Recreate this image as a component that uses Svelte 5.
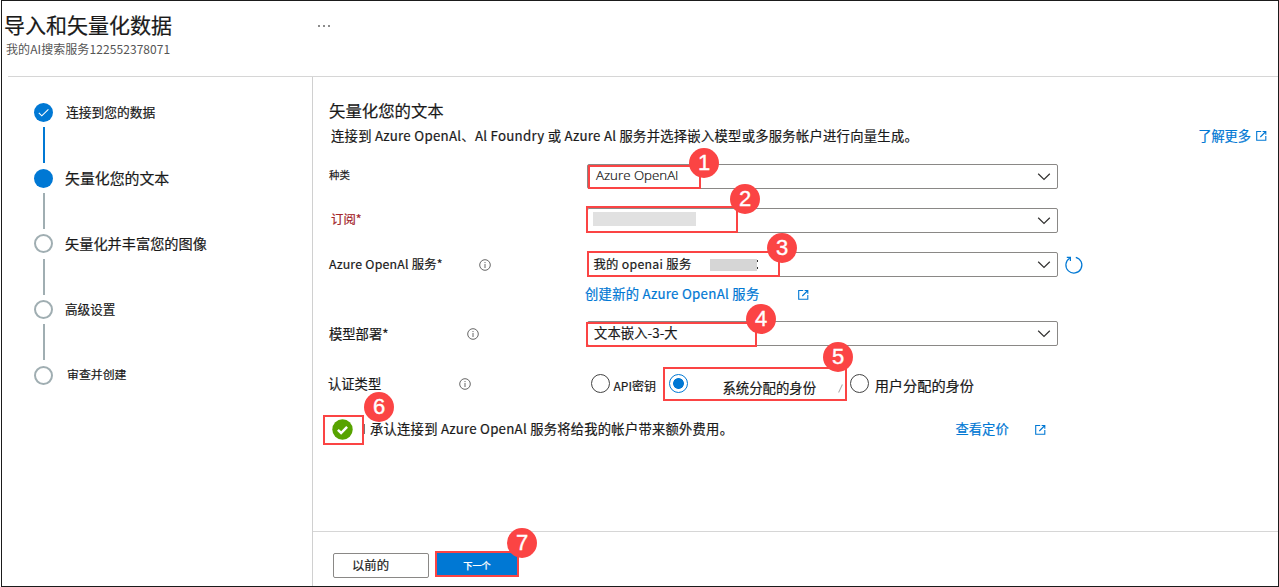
<script>
  const steps = [
    { text: '连接到您的数据', state: 'done' },
    { text: '矢量化您的文本', state: 'current' },
    { text: '矢量化并丰富您的图像', state: 'todo' },
    { text: '高级设置', state: 'todo' },
    { text: '审查并创建', state: 'todo' }
  ];
</script>

{#snippet chevron()}
  <svg class="chevron" width="14" height="9" viewBox="0 0 14 9"><path d="M1.2 1.8 L7 7.4 L12.8 1.8" fill="none" stroke="#323130" stroke-width="1.2" /></svg>
{/snippet}

{#snippet info()}
  <svg class="info" width="12" height="12" viewBox="0 0 12 12">
    <circle cx="6" cy="6" r="5.3" fill="none" stroke="#555" stroke-width=".9" />
    <path d="M6 5v4M6 3v1.1" stroke="#555" stroke-width=".9" />
  </svg>
{/snippet}

{#snippet external()}
  <svg class="ext" width="11" height="11" viewBox="0 0 11 11" fill="none" stroke="#0078d4" stroke-width="1.1">
    <path d="M5.2 1.5H.7v8.8h9.1V6M6.6 1.5h3.2v3.2M9.8 1.5L4.3 7" />
  </svg>
{/snippet}

<div class="page">
  <header>
    <div class="titles">
      <h1>导入和矢量化数据</h1>
      <p class="subtitle">我的AI搜索服务122552378071</p>
    </div>
    <span class="more"><i></i><i></i><i></i></span>
  </header>

  <div class="body">
    <nav>
      {#each steps as step, i}
        {#if i > 0}
          <div class="line" class:active={i === 1}></div>
        {/if}
        <div class="step">
          <span class="dot {step.state}">
            {#if step.state === 'done'}
              <svg width="19" height="19" viewBox="0 0 19 19"><path d="M4.8 9.8l3 3 6.6-6.5" fill="none" stroke="#fff" stroke-width="1.1" /></svg>
            {/if}
          </span>
          <span class="label l{i + 1}">{step.text}</span>
        </div>
      {/each}
    </nav>

    <main>
      <section class="content">
        <h2>矢量化您的文本</h2>
        <div class="desc">
          <p>连接到 Azure OpenAl、Al Foundry 或 Azure Al 服务并选择嵌入模型或多服务帐户进行向量生成。</p>
          <a class="learn"><span>了解更多</span>{@render external()}</a>
        </div>

        <div class="row kind">
          <div class="name">种类</div>
          <div class="select"><span>Azure OpenAI</span>{@render chevron()}</div>
        </div>
        <div class="row sub">
          <div class="name">订阅*</div>
          <div class="select"><span class="masked"></span>{@render chevron()}</div>
        </div>
        <div class="row service">
          <div class="name"><span>Azure OpenAl 服务*</span>{@render info()}</div>
          <div class="select"><span class="value">我的 openai 服务</span><span class="masked"></span><span class="tail"></span>{@render chevron()}</div>
          <svg class="refresh" width="20" height="20" viewBox="0 0 20 20" fill="none" stroke="#0078d4" stroke-width="1.2">
            <path d="M11.8 2.3A8 8 0 1 1 5.6 3.3M2.8 2.4H6.4V6" />
          </svg>
        </div>
        <div class="create"><a>创建新的 Azure OpenAl 服务</a>{@render external()}</div>
        <div class="row model">
          <div class="name"><span>模型部署*</span>{@render info()}</div>
          <div class="select"><span class="value">文本嵌入-3-大</span>{@render chevron()}</div>
        </div>
        <div class="row auth">
          <div class="name"><span>认证类型</span>{@render info()}</div>
          <div class="radios">
            <span class="radio"></span><span class="api">API密钥</span>
            <span class="radio on"></span><span class="system">系统分配的身份</span>
            <span class="slash"></span>
            <span class="radio last"></span><span class="user">用户分配的身份</span>
          </div>
        </div>
        <div class="ack">
          <svg width="21" height="21" viewBox="0 0 21 21"><circle cx="10.5" cy="10.5" r="10.2" fill="#57a300" /><path d="M5.9 10.9l3.2 3.1 6-6.2" fill="none" stroke="#fff" stroke-width="2.5" /></svg>
          <span class="edge"></span>
          <span class="agree">承认连接到 Azure OpenAl 服务将给我的帐户带来额外费用。</span>
          <a class="pricing"><span>查看定价</span>{@render external()}</a>
        </div>
      </section>
      <footer>
        <button class="prev">以前的</button>
        <button class="next">下一个</button>
      </footer>
    </main>
  </div>

  <div class="mark box1"><b>1</b></div>
  <div class="mark box2"><b>2</b></div>
  <div class="mark box3"><b>3</b></div>
  <div class="mark box4"><b>4</b></div>
  <div class="mark box5"><b>5</b></div>
  <div class="mark box6"><b>6</b></div>
  <div class="mark box7"><b>7</b></div>
</div>

<style>
  :global(body) { background: #fff; overflow: hidden; }
  * { box-sizing: border-box; }
  .page {
    position: relative;
    width: 1278px;
    height: 587px;
    margin-left: 1px;
    border: 1px solid #1b1b1b;
    display: flex;
    flex-direction: column;
    font-family: "Noto Sans CJK SC", sans-serif;
    color: #1a1a1a;
    white-space: nowrap;
    overflow: hidden;
    -webkit-text-stroke: .2px currentColor;
  }
  h1, h2, p { margin: 0; font-weight: 400; }
  a { color: #0078d4; text-decoration: none; }
  svg { display: block; flex: none; }
  header { height: 76px; flex: none; margin-left: 6px; border-bottom: 1px solid #d6d6d6; display: flex; }
  .titles { width: 314px; margin-left: -4px; padding-top: 7px; }
  h1 { font-size: 21px; line-height: 32px; }
  .subtitle { font-size: 12px; line-height: 14px; color: #555; margin: 2px 0 0 2px; letter-spacing: .08px; -webkit-text-stroke: 0; }
  .more { display: flex; gap: 3px; padding-top: 24px; }
  .more i { width: 2px; height: 2px; border-radius: 1px; background: #666; }

  .body { display: flex; flex: 1; min-height: 0; }
  nav { width: 311px; flex: none; border-right: 1px solid #d0d0d0; padding: 26px 0 0 32px; display: flex; flex-direction: column; gap: 5.35px; }
  .step { display: flex; align-items: center; height: 19px; flex: none; }
  .dot { width: 19px; height: 19px; border-radius: 50%; flex: none; background: #0078d4; }
  .todo { background: #fff; border: 2px solid #a0aeb2; }
  .line { width: 2px; height: 36px; margin-left: 9px; flex: none; background: #a0aeb2; }
  .line.active { background: #0078d4; }
  .label { line-height: 19px; padding-bottom: 2px; }
  .l1 { font-size: 12.75px; margin-left: 13px; }
  .l2 { font-size: 14.9px; margin-left: 12px; }
  .l3 { font-size: 14.2px; margin-left: 12px; padding-bottom: 0; }
  .l4 { font-size: 12.6px; margin-left: 12px; }
  .l5 { font-size: 11.9px; margin-left: 14px; padding-bottom: 4px; }

  main { flex: 1; min-width: 0; display: flex; flex-direction: column; }
  .content { flex: 1; min-height: 0; padding: 20px 10px 0 16px; }
  h2 { font-size: 16.4px; line-height: 26px; }
  .desc { display: flex; justify-content: space-between; height: 25px; line-height: 26px; font-size: 13.3px; padding-left: 2px; }
  .desc p { letter-spacing: .27px; }
  .learn { display: flex; align-items: center; gap: 5px; font-size: 13.2px; line-height: 24px; margin-right: 1px; }
  .row { display: flex; align-items: center; height: 25px; }
  .name { width: 258px; flex: none; display: flex; align-items: center; font-size: 13.3px; }
  .select { width: 471px; height: 25px; border: 1px solid #8a8886; border-radius: 2px; display: flex; align-items: center; padding: 0 6px; font-size: 13.3px; }
  .chevron { margin-left: auto; }
  .masked { background: #e1e1e1; }
  .kind { margin-top: 16px; }
  .kind .name { font-size: 10.4px; padding-bottom: 5px; }
  .kind .select { font-family: "Open Sans", sans-serif; font-weight: 300; color: #111; padding: 0 6px 0 8px; }
  .kind .select span { padding-bottom: 3px; }
  .sub { margin-top: 19px; }
  .sub .name { font-size: 12.4px; color: #a4262c; padding: 0 0 3px 2px; }
  .sub .masked { width: 103px; height: 14px; margin-bottom: 3px; margin-left: -1px; }
  .service { margin-top: 19px; }
  .service .name { font-size: 12.3px; letter-spacing: .24px; }
  .service .name span, .value { padding-bottom: 2px; }
  .service .info { margin-left: 36px; }
  .service .select { font-size: 12.3px; }
  .service .value { letter-spacing: .3px; width: 99px; margin-left: -.5px; }
  .service .masked { width: 47px; height: 12px; margin-left: 17px; background: #d6d6d6; }
  .tail { width: 1px; height: 10px; background: linear-gradient(#333 0 2px, transparent 2px 7px, #333 7px 9px, transparent 9px); }
  .refresh { margin-left: 6px; }
  .create { display: flex; align-items: center; height: 22px; margin: 6px 0 0 256px; font-size: 13.3px; letter-spacing: .28px; }
  .create a { padding-bottom: 2px; }
  .create .ext { margin-left: 39px; }
  .model { margin-top: 16px; }
  .model .info { margin-left: 79px; }
  .model .select { letter-spacing: .08px; }
  .auth { margin-top: 25px; }
  .auth .info { margin-left: 77px; }
  .auth .name span { margin-left: -1px; margin-right: 1px; }
  .radios { display: flex; align-items: center; padding-left: 4px; }
  .radio { width: 19px; height: 19px; border: 1px solid #444; border-radius: 50%; flex: none; }
  .on { border-color: #0078d4; background: radial-gradient(circle, #0078d4 5px, #fff 5.8px); margin-left: 13.5px; }
  .api { font-size: 12px; margin-left: 3.5px; padding-top: 3px; }
  .system { font-size: 13.4px; margin-left: 34px; padding-top: 6px; }
  .slash { width: 1px; height: 9px; background: #aaa; transform: rotate(25deg); margin: 10px 0 0 24px; }
  .last { margin-left: 9px; }
  .user { font-size: 14.2px; margin-left: 5.5px; padding-top: 3px; }
  .ack { display: flex; align-items: center; height: 26px; margin-top: 20px; padding-left: 3px; font-size: 13.3px; }
  .edge { width: 1px; height: 10px; background: #777; margin-left: 11px; }
  .agree { margin-left: 5px; width: 361px; letter-spacing: .24px; padding-bottom: 2px; }
  .pricing { display: flex; align-items: center; gap: 26px; margin-left: 224.5px; }
  .pricing span { padding-bottom: 2px; }

  footer { height: 55px; flex: none; border-top: 1px solid #d6d6d6; display: flex; gap: 8px; padding: 21px 0 0 20px; }
  button { font-family: inherit; padding: 0; height: 25px; }
  .prev { width: 96px; border: 1px solid #8a8886; border-radius: 2px; background: #fff; color: #222; font-size: 12.4px; padding: 0 21px 2px 0; }
  .next { width: 80px; height: 23px; border: 0; background: #0078d4; color: #fff; font-size: 9.2px; font-weight: 500; }

  .mark { position: absolute; border: 2px solid #fb4444; }
  .mark b { position: absolute; width: 30px; height: 30px; border-radius: 50%; background: #fb4444; color: #fff; font: 400 22px/30px "Liberation Sans", Arial, sans-serif; text-align: center; -webkit-text-stroke: .4px #fff; }
  .box1 { left: 586px; top: 164px; width: 113px; height: 24px; }
  .box1 b { left: 99px; top: -19px; }
  .box2 { left: 584px; top: 205px; width: 152px; height: 27px; }
  .box2 b { left: 142px; top: -24px; }
  .box3 { left: 585px; top: 250px; width: 193px; height: 26px; }
  .box3 b { left: 178px; top: -20px; }
  .box4 { left: 584px; top: 321px; width: 171px; height: 25px; }
  .box4 b { left: 158px; top: -20px; }
  .box5 { left: 661px; top: 366px; width: 184px; height: 34px; }
  .box5 b { left: 158px; top: -27px; }
  .box6 { left: 321px; top: 414px; width: 41px; height: 30px; }
  .box6 b { left: 39px; top: -25px; }
  .box7 { left: 433px; top: 550px; width: 84px; height: 26px; }
  .box7 b { left: 70px; top: -25px; }
</style>
